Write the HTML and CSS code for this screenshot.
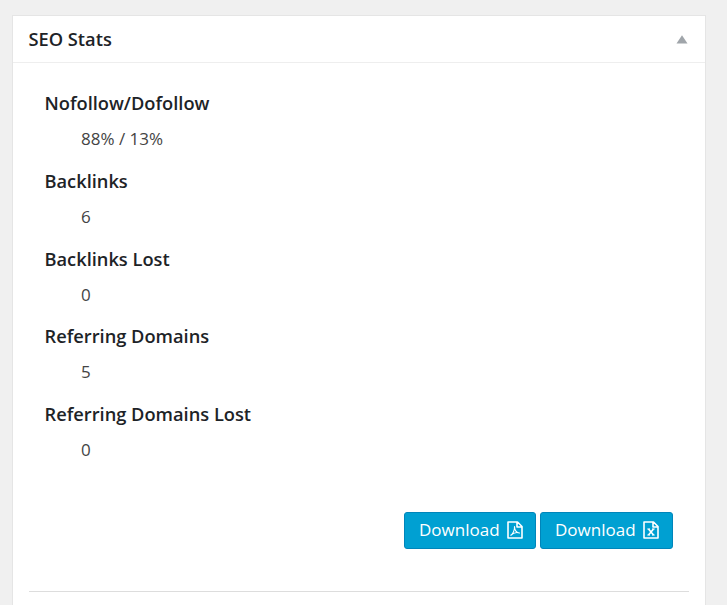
FILE: index.html
```html
<!DOCTYPE html>
<html lang="en">
<head>
<meta charset="utf-8">
<title>SEO Stats</title>
<link rel="stylesheet" href="styles.css">
</head>
<body>
<section class="panel">
  <header class="panel-header">
    <h2>SEO Stats</h2>
    <svg class="toggle" viewBox="0 0 12 9"><path d="M6 0.3 11.500 8.500H0.500z"/></svg>
  </header>
  <div class="panel-body">
    <dl class="stats">
      <dt>Nofollow/Dofollow</dt><dd>88% / 13%</dd>
      <dt>Backlinks</dt><dd>6</dd>
      <dt>Backlinks Lost</dt><dd>0</dd>
      <dt>Referring Domains</dt><dd>5</dd>
      <dt>Referring Domains Lost</dt><dd>0</dd>
    </dl>
    <div class="actions">
      <button class="button">Download
        <svg class="file" viewBox="0 0 16 18"><path d="M1 1H10.500L15 5.500V17H1zM10 1V6H15"/><path class="thin" d="M3.500 14.500C5.500 13.500 8 9 7.500 5.500C7.500 9 9.500 12 12.500 12C10 11 6 12 3.500 14.500"/></svg>
      </button>
      <button class="button">Download
        <svg class="file" viewBox="0 0 16 18"><path d="M1 1H10.500L15 5.500V17H1zM10 1V6H15"/><path d="M5.500 8L10.500 14M10.500 8L5.500 14"/><path class="thin" d="M4.300 8H7M9 8H11.700M4.300 14H7M9 14H11.700"/></svg>
      </button>
    </div>
    <hr class="divider">
  </div>
</section>
</body>
</html>
```
FILE: styles.css
```css
* { box-sizing: border-box; }
body {
  margin: 0;
  height: 605px;
  overflow: hidden;
  padding: 15px 21px 0 12px;
  background: #f0f0f0;
  color: #444;
  font: 17px/24px "Open Sans", sans-serif;
}
.panel { height: 610px; background: #fff; border: 1px solid #e5e5e5; }
.panel-header {
  display: flex;
  align-items: center;
  justify-content: space-between;
  height: 47px;
  padding: 0 17px 0 15.500px;
  border-bottom: 1px solid #eee;
}
h2 { margin: 0 0 1px; color: #1d2327; font-size: 18.250px; font-weight: 600; }
.toggle { width: 12px; height: 9px; margin-top: 1px; fill: #a0a5aa; }
.panel-body { padding: 28.400px 16px 0; }
.stats { margin: 0; padding-left: 15.500px; }
dt { height: 36px; color: #1d2327; font-size: 18.250px; font-weight: 600; }
dd { height: 41.600px; margin: 0 0 0 36.500px; }
.actions { display: flex; justify-content: flex-end; gap: 4px; padding: 32.600px 16px 0 0; }
.button {
  display: flex;
  align-items: center;
  justify-content: space-between;
  width: 133px;
  height: 37px;
  padding: 0 13px 2px 14px;
  border: 1px solid #0085ba;
  border-radius: 3px;
  background: #00a0d2;
  color: #fff;
  font: 17px "Open Sans", sans-serif;
}
.button:first-child { width: 132px; padding-right: 12px; }
.file { width: 16px; height: 18px; margin-top: 1px; fill: none; stroke: #fff; stroke-width: 1.600; stroke-linejoin: round; }
.thin { stroke-width: 1.100; }
.divider { margin: 42px 0 0; border: 0; border-top: 1px solid #ddd; }
```
